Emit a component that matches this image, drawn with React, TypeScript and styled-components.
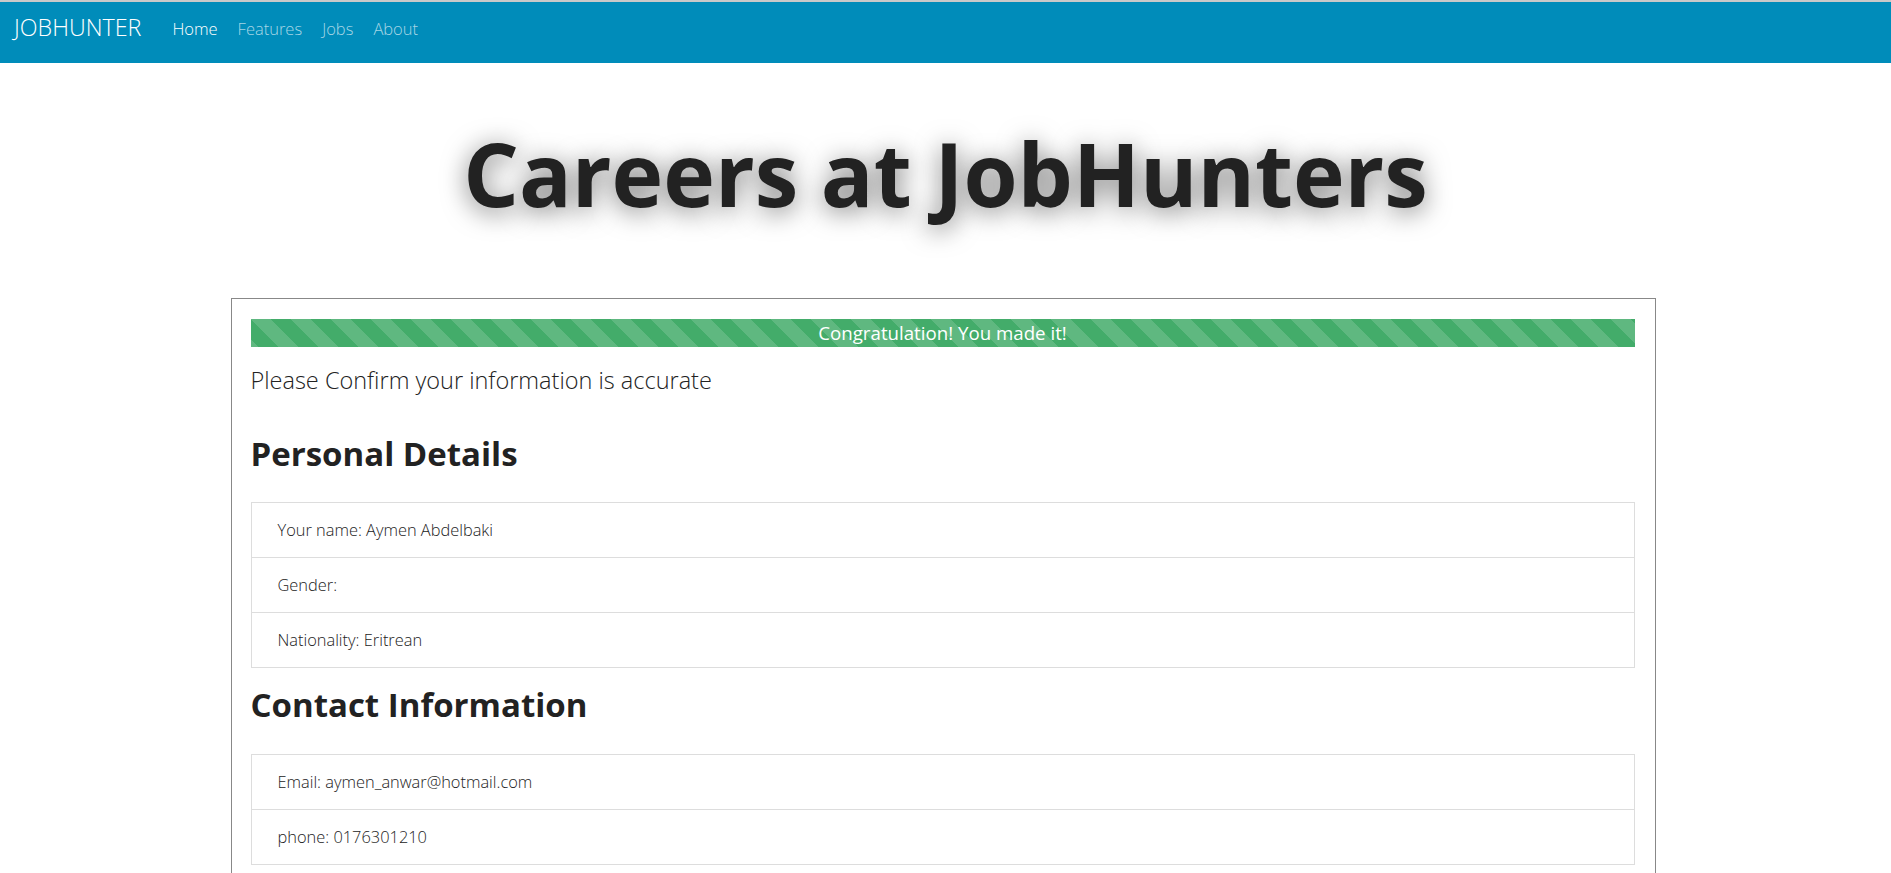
import React from 'react';
import styled, { createGlobalStyle } from 'styled-components';

const GlobalStyle = createGlobalStyle`
  html, body {
    margin: 0;
    padding: 0;
    overflow: hidden;
    background: #fff;
  }
  body {
    font-family: "Open Sans", "Liberation Sans", sans-serif;
    color: #222;
  }
  * {
    box-sizing: border-box;
  }
`;

const Navbar = styled.nav`
  display: flex;
  align-items: flex-start;
  height: 63px;
  background: #008cba;
  border-top: 2px solid #c9c9c9;
  padding-left: 14px;
`;

const Brand = styled.a`
  margin-top: 14px;
  margin-right: 21px;
  font-size: 23.3px;
  font-weight: 300;
  line-height: 1;
  color: #fff;
  text-decoration: none;
`;

const NavList = styled.ul`
  display: flex;
  margin: 19px 0 0;
  padding: 0;
  list-style: none;
`;

const NavLink = styled.a<{ $active?: boolean }>`
  display: block;
  padding: 0 10px;
  font-size: 16.5px;
  font-weight: 300;
  line-height: 1;
  color: ${({ $active }) => ($active ? '#ffffff' : 'rgba(255, 255, 255, 0.66)')};
  text-decoration: none;
`;

const Title = styled.h1`
  margin: 62px 0 0;
  text-align: center;
  font-size: 87.5px;
  font-weight: 700;
  line-height: 97px;
  color: #222;
  text-shadow: 0 4px 26px rgba(0, 0, 0, 0.55);
`;

const Card = styled.section`
  width: 1425px;
  margin: 76px 0 0 calc(50% - 715px);
  border: 1px solid #888;
  padding: 20px 20px 24px 19px;
`;

const Progress = styled.div`
  height: 28px;
  background-color: #43ac6a;
  background-image: linear-gradient(
    45deg,
    rgba(255, 255, 255, 0.15) 25%,
    transparent 25%,
    transparent 50%,
    rgba(255, 255, 255, 0.15) 50%,
    rgba(255, 255, 255, 0.15) 75%,
    transparent 75%,
    transparent
  );
  background-size: 40px 40px;
  color: #fff;
  font-size: 18.7px;
  line-height: 28px;
  text-align: center;
`;

const Lead = styled.p`
  margin: 17px 0 0;
  font-size: 23.5px;
  font-weight: 300;
  line-height: 32px;
  color: #222;
`;

const SectionTitle = styled.h2<{ $top: number }>`
  margin: ${({ $top }) => $top}px 0 30px;
  font-size: 33px;
  font-weight: 700;
  line-height: 37.4px;
  color: #222;
`;

const InfoList = styled.ul`
  margin: 0;
  padding: 0;
  list-style: none;
  border: 1px solid #ddd;
`;

const InfoItem = styled.li`
  padding: 15px 26px;
  font-size: 16.4px;
  font-weight: 300;
  line-height: 24px;
  color: #222;

  & + & {
    border-top: 1px solid #ddd;
  }
`;

const personal = [
  'Your name: Aymen Abdelbaki',
  'Gender:',
  'Nationality: Eritrean',
];

const contact = ['Email: aymen_anwar@hotmail.com', 'phone: 0176301210'];

export default function App() {
  return (
    <>
      <GlobalStyle />
      <Navbar>
        <Brand href="#">JOBHUNTER</Brand>
        <NavList>
          <li><NavLink href="#" $active>Home</NavLink></li>
          <li><NavLink href="#">Features</NavLink></li>
          <li><NavLink href="#">Jobs</NavLink></li>
          <li><NavLink href="#">About</NavLink></li>
        </NavList>
      </Navbar>

      <Title>Careers at JobHunters</Title>

      <Card>
        <Progress>Congratulation! You made it!</Progress>
        <Lead>Please Confirm your information is accurate</Lead>

        <SectionTitle $top={39}>Personal Details</SectionTitle>
        <InfoList>
          {personal.map((line) => (
            <InfoItem key={line}>{line}</InfoItem>
          ))}
        </InfoList>

        <SectionTitle $top={18}>Contact Information</SectionTitle>
        <InfoList>
          {contact.map((line) => (
            <InfoItem key={line}>{line}</InfoItem>
          ))}
        </InfoList>
      </Card>
    </>
  );
}
